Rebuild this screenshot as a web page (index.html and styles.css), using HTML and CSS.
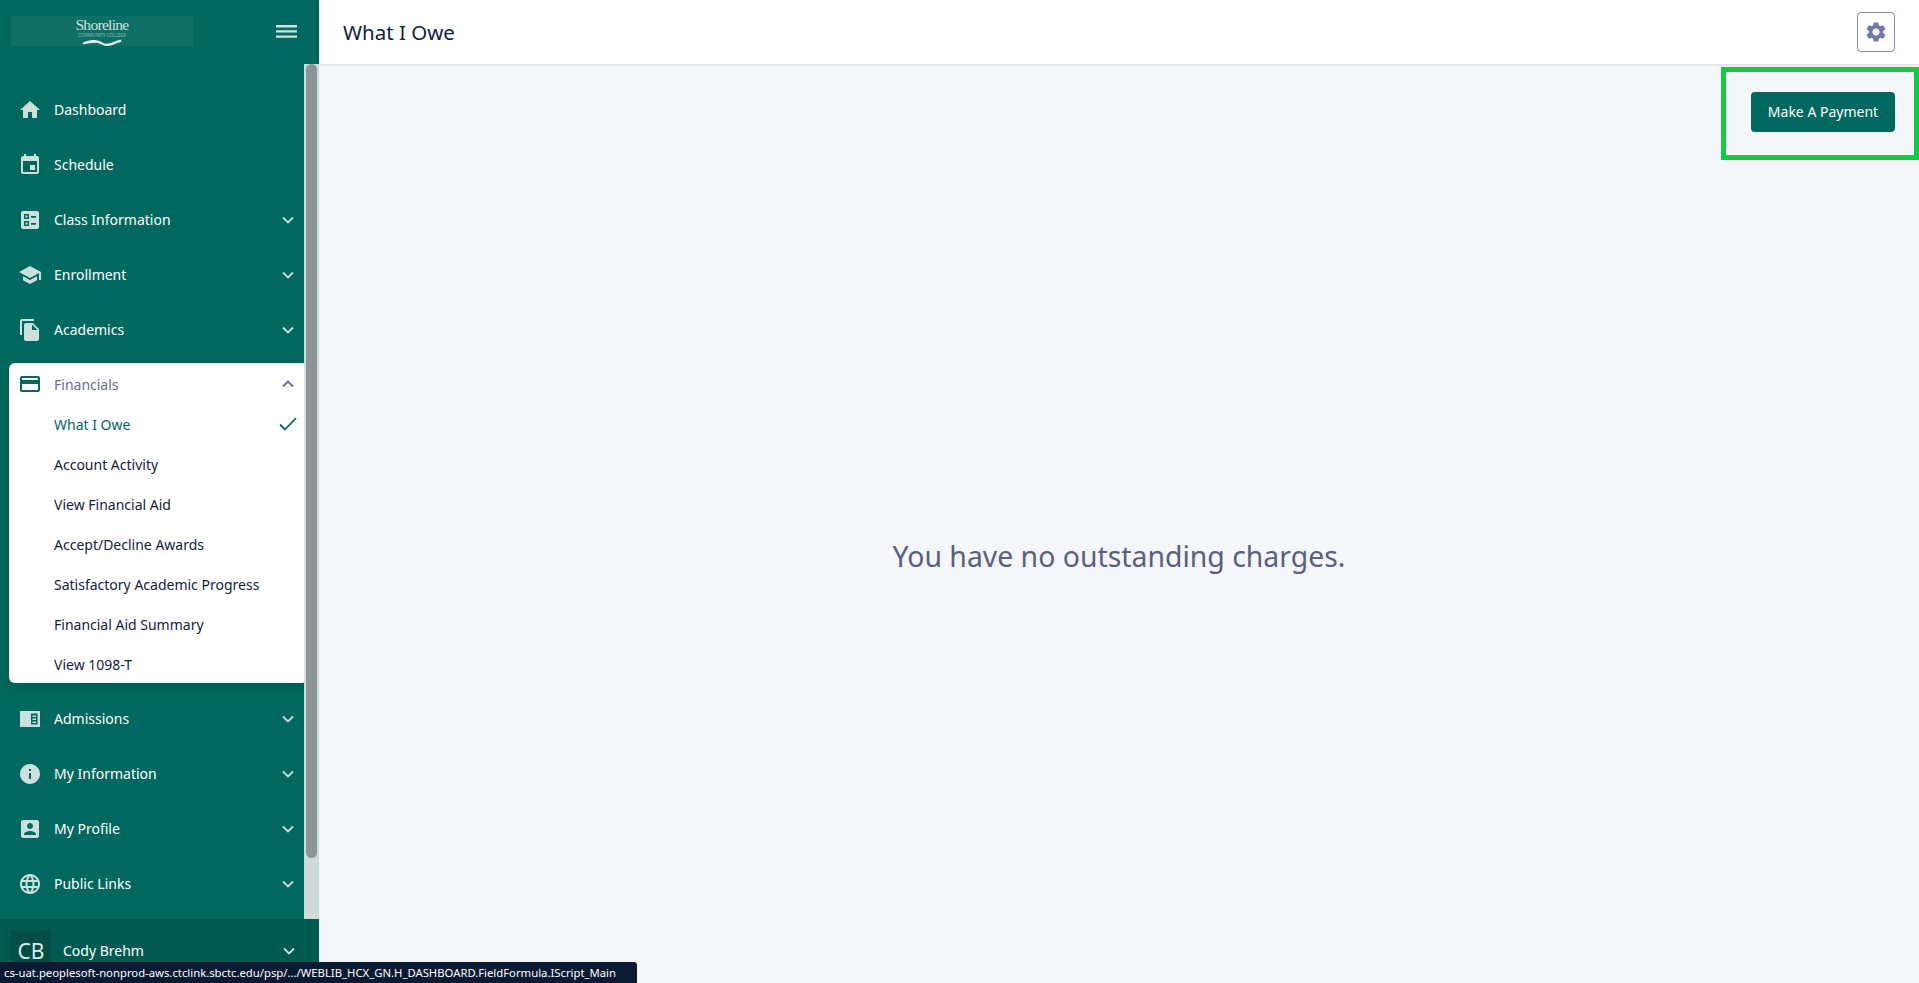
FILE: index.html
```html
<!DOCTYPE html>
<html lang="en">
<head>
    <meta charset="UTF-8">
    <title>What I Owe</title>
    <link rel="stylesheet" href="styles.css">
</head>
<body>

    <!-- Sidebar -->
    <aside class="sidebar">
      <div class="brand">
        <div class="logo">
          <span class="logo-name">Shoreline</span>
          <span class="logo-sub">COMMUNITY COLLEGE</span>
          <svg class="logo-wave" viewBox="0 0 48 10"><path d="M0 6c6-3 12-4 18-3s8 5 14 4 10-4 16-5v3c-6 1-10 4-16 5S22 6 17 6 6 7 0 8z"/></svg>
        </div>
        <svg class="burger" viewBox="0 0 21 13"><path d="M0 0h21v2.4H0zM0 5.2h21v2.4H0zM0 10.4h21v2.4H0z"/></svg>
      </div>

      <nav class="menu">
        <a class="item">
          <svg class="icon" viewBox="0 0 24 24"><path d="M10 20v-6h4v6h5v-8h3L12 3 2 12h3v8z"/></svg>
          <span>Dashboard</span>
        </a>
        <a class="item">
          <svg class="icon" viewBox="0 0 24 24"><path d="M17 12h-5v5h5v-5zM16 1v2H8V1H6v2H5c-1.11 0-1.99.9-1.99 2L3 19c0 1.1.89 2 2 2h14c1.1 0 2-.9 2-2V5c0-1.1-.9-2-2-2h-1V1h-2zm3 18H5V8h14v11z"/></svg>
          <span>Schedule</span>
        </a>
        <a class="item">
          <svg class="icon" viewBox="0 0 24 24"><path fill-rule="evenodd" d="M5 3h14c1.1 0 2 .9 2 2v14c0 1.1-.9 2-2 2H5c-1.1 0-2-.9-2-2V5c0-1.100.9-2 2-2zm1 3v5h5V6H6zm1.500 1.500h2v2h-2zM6 13v5h5v-5H6zm1.500 1.500h2v2h-2zM13 8v1.800h5V8h-5zm0 7v1.800h5V15h-5z"/></svg>
          <span>Class Information</span>
          <svg class="chevron" viewBox="0 0 12 8"><path d="M1 1.500l5 5 5-5"/></svg>
        </a>
        <a class="item">
          <svg class="icon" viewBox="0 0 24 24"><path d="M5 13.180v4L12 21l7-3.820v-4L12 17l-7-3.820zM12 3L1 9l11 6 9-4.910V17h2V9L12 3z"/></svg>
          <span>Enrollment</span>
          <svg class="chevron" viewBox="0 0 12 8"><path d="M1 1.500l5 5 5-5"/></svg>
        </a>
        <a class="item">
          <svg class="icon" viewBox="0 0 24 24"><path d="M16 1H4c-1.100 0-2 .9-2 2v14h2V3h12V1zm-1 4l6 6v10c0 1.100-.9 2-2 2H7.990C6.890 23 6 22.100 6 21l.01-14c0-1.100.89-2 1.990-2h7zm-1 7h5.500L14 6.500V12z"/></svg>
          <span>Academics</span>
          <svg class="chevron" viewBox="0 0 12 8"><path d="M1 1.500l5 5 5-5"/></svg>
        </a>

        <!-- Open group -->
        <div class="group">
          <a class="item group-head">
            <svg class="icon" viewBox="0 0 24 24"><path d="M20 4H4c-1.110 0-1.990.89-1.990 2L2 18c0 1.110.89 2 2 2h16c1.110 0 2-.89 2-2V6c0-1.110-.89-2-2-2zm0 14H4v-6h16v6zm0-10H4V6h16v2z"/></svg>
            <span>Financials</span>
            <svg class="chevron" viewBox="0 0 12 8"><path d="M1 6.500l5-5 5 5"/></svg>
          </a>
          <a class="sub current">
            <span>What I Owe</span>
            <svg class="check" viewBox="0 0 18 14"><path d="M1 7.500l5 5L17 1"/></svg>
          </a>
          <a class="sub">Account Activity</a>
          <a class="sub">View Financial Aid</a>
          <a class="sub">Accept/Decline Awards</a>
          <a class="sub">Satisfactory Academic Progress</a>
          <a class="sub">Financial Aid Summary</a>
          <a class="sub">View 1098-T</a>
        </div>

        <a class="item">
          <svg class="icon" viewBox="0 0 24 24"><path fill-rule="evenodd" d="M3 4h18c.6 0 1 .4 1 1v14c0 .6-.4 1-1 1H3c-.6 0-1-.4-1-1V5c0-.6.4-1 1-1zm10 2.500v11h6.500v-11H13zm1.500 2h3.500V10h-3.500zm0 3h3.500V13h-3.500zm0 3h3.500V16h-3.500z"/></svg>
          <span>Admissions</span>
          <svg class="chevron" viewBox="0 0 12 8"><path d="M1 1.500l5 5 5-5"/></svg>
        </a>
        <a class="item">
          <svg class="icon" viewBox="0 0 24 24"><path d="M12 2C6.480 2 2 6.480 2 12s4.480 10 10 10 10-4.480 10-10S17.520 2 12 2zm1 15h-2v-6h2v6zm0-8h-2V7h2v2z"/></svg>
          <span>My Information</span>
          <svg class="chevron" viewBox="0 0 12 8"><path d="M1 1.500l5 5 5-5"/></svg>
        </a>
        <a class="item">
          <svg class="icon" viewBox="0 0 24 24"><path d="M3 5v14c0 1.100.89 2 2 2h14c1.100 0 2-.9 2-2V5c0-1.100-.9-2-2-2H5c-1.110 0-2 .9-2 2zm12 4c0 1.660-1.340 3-3 3s-3-1.340-3-3 1.340-3 3-3 3 1.340 3 3zm-9 8c0-2 4-3.100 6-3.100s6 1.100 6 3.100v1H6v-1z"/></svg>
          <span>My Profile</span>
          <svg class="chevron" viewBox="0 0 12 8"><path d="M1 1.500l5 5 5-5"/></svg>
        </a>
        <a class="item">
          <svg class="icon" viewBox="0 0 24 24"><path d="M11.990 2C6.470 2 2 6.480 2 12s4.470 10 9.990 10C17.520 22 22 17.520 22 12S17.520 2 11.990 2zm6.930 6h-2.950c-.32-1.250-.78-2.450-1.380-3.560 1.840.63 3.370 1.910 4.330 3.560zM12 4.040c.83 1.200 1.480 2.530 1.910 3.960h-3.820c.43-1.430 1.080-2.760 1.910-3.960zM4.260 14C4.100 13.360 4 12.690 4 12s.1-1.360.26-2h3.380c-.08.66-.14 1.320-.14 2 0 .68.06 1.340.14 2H4.260zm.82 2h2.950c.32 1.250.78 2.450 1.380 3.560-1.840-.63-3.370-1.900-4.330-3.560zm2.950-8H5.080c.96-1.660 2.490-2.930 4.330-3.560C8.810 5.550 8.350 6.750 8.030 8zM12 19.960c-.83-1.200-1.480-2.530-1.910-3.960h3.820c-.43 1.430-1.080 2.760-1.910 3.960zM14.340 14H9.660c-.09-.66-.16-1.320-.16-2 0-.68.07-1.350.16-2h4.680c.09.65.16 1.320.16 2 0 .68-.07 1.340-.16 2zm.25 5.560c.6-1.110 1.060-2.310 1.380-3.560h2.950c-.96 1.650-2.490 2.930-4.330 3.560zM16.360 14c.08-.66.14-1.320.14-2 0-.68-.06-1.340-.14-2h3.380c.16.64.26 1.310.26 2s-.1 1.360-.26 2h-3.380z"/></svg>
          <span>Public Links</span>
          <svg class="chevron" viewBox="0 0 12 8"><path d="M1 1.500l5 5 5-5"/></svg>
        </a>

        <div class="scrollbar"><div class="thumb"></div></div>
      </nav>

      <div class="user">
        <div class="avatar">CB</div>
        <span>Cody Brehm</span>
        <svg class="chevron" viewBox="0 0 12 8"><path d="M1 1.500l5 5 5-5"/></svg>
      </div>
    </aside>

    <!-- Main -->
    <div class="main">
      <header class="topbar">
        <h1>What I Owe</h1>
        <button class="gear">
          <svg viewBox="0 0 24 24"><path d="M19.140 12.940c.04-.3.06-.61.06-.94 0-.32-.02-.64-.07-.94l2.030-1.580c.18-.14.23-.41.12-.61l-1.920-3.320c-.12-.22-.37-.29-.59-.22l-2.390.96c-.5-.38-1.030-.7-1.620-.94l-.36-2.540c-.04-.24-.24-.41-.48-.41h-3.840c-.24 0-.43.17-.47.41l-.36 2.540c-.59.24-1.130.57-1.620.94l-2.390-.96c-.22-.08-.47 0-.59.22L2.740 8.870c-.12.21-.08.47.12.61l2.030 1.580c-.05.3-.09.63-.09.94s.02.64.07.94l-2.030 1.580c-.18.14-.23.41-.12.61l1.920 3.320c.12.22.37.29.59.22l2.390-.96c.5.38 1.030.7 1.620.94l.36 2.540c.05.24.24.41.48.41h3.840c.24 0 .44-.17.47-.41l.36-2.540c.59-.24 1.130-.56 1.620-.94l2.390.96c.22.08.47 0 .59-.22l1.920-3.320c.12-.22.07-.47-.12-.61l-2.010-1.580zM12 15.600c-1.980 0-3.600-1.620-3.600-3.600s1.620-3.600 3.600-3.600 3.600 1.620 3.600 3.600-1.620 3.600-3.600 3.600z"/></svg>
        </button>
      </header>

      <div class="actions">
        <button class="pay">Make A Payment</button>
      </div>

      <div class="empty">You have no outstanding charges.</div>
    </div>

    <!-- Annotation and status tooltip sit over the page -->
    <div class="highlight"></div>
    <div class="status">cs-uat.peoplesoft-nonprod-aws.ctclink.sbctc.edu/psp/.../WEBLIB_HCX_GN.H_DASHBOARD.FieldFormula.IScript_Main</div>

</body>
</html>
```

FILE: styles.css
```css
/* Global */
html, body { height: 100%; }
body {
    margin: 0;
    display: flex;
    overflow: hidden;
    font-family: "Noto Sans", Roboto, sans-serif;
    background-color: #f4f6fa;
}

/* Sidebar */
.sidebar {
    width: 319px;
    flex: none;
    display: flex;
    flex-direction: column;
    background: #00685e;
    color: #fff;
}
.brand {
    height: 64px;
    flex: none;
    display: flex;
    align-items: center;
    justify-content: space-between;
    padding: 0 22px 2px 11px;
    box-sizing: border-box;
}
.logo {
    width: 182px;
    height: 30px;
    display: flex;
    flex-direction: column;
    align-items: center;
    background: rgba(255,255,255,0.05);
    color: #cfe2de;
}
.logo-name { font-family: "Liberation Serif", serif; font-size: 15.5px; line-height: 17px; letter-spacing: -0.7px; }
.logo-sub { font-size: 4.5px; line-height: 5px; white-space: nowrap; opacity: 0.6; }
.logo-wave { width: 48px; height: 8px; fill: #e3eeec; }
.burger { width: 21px; height: 13px; fill: #cfe2de; }

/* Menu */
.menu {
    position: relative;
    flex: 1;
    padding: 18px 15px 0 0;
}
.item {
    height: 55px;
    display: flex;
    align-items: center;
    padding: 0 10px 0 18px;
    font-size: 14px;
}
.item span { flex: 1; margin-left: 12px; }
.icon { width: 24px; height: 24px; flex: none; fill: #cce1de; }
.chevron {
    width: 12px;
    height: 8px;
    flex: none;
    fill: none;
    stroke: #cce1de;
    stroke-width: 1.8;
}

/* Open group */
.group {
    margin: 6px -4px 8px 9px;
    height: 320px;
    background: #fff;
    border-radius: 6px;
    box-shadow: 0 4px 12px rgba(0,0,0,0.15);
}
.group-head { height: 42px; padding-left: 9px; padding-right: 14px; color: #666d8b; }
.group-head .icon { fill: #00685e; }
.group-head .chevron { stroke: #666d8b; }
.sub {
    height: 40px;
    display: flex;
    align-items: center;
    justify-content: space-between;
    padding: 0 11px 0 45px;
    font-size: 14px;
    color: #14213d;
    margin-top: -1px;
    margin-bottom: 1px;
}
.current { color: #00685e; }
.check { width: 18px; height: 14px; fill: none; stroke: #00685e; stroke-width: 1.8; }

/* Fake scrollbar */
.scrollbar {
    position: absolute;
    top: 0;
    right: 0;
    bottom: 0;
    width: 15px;
    background: rgba(213,223,221,0.97);
}
.thumb {
    width: 11px;
    height: 794px;
    margin-left: 2px;
    background: #8b9593;
    border-radius: 6px;
}

/* User */
.user {
    height: 64px;
    flex: none;
    display: flex;
    align-items: center;
    padding: 0 24px 0 11px;
    background: #005a52;
    font-size: 14px;
}
.user span { flex: 1; margin: 0 0 2px 12px; }
.avatar {
    width: 40px;
    height: 40px;
    display: flex;
    align-items: center;
    justify-content: center;
    background: #024e47;
    font-size: 21px;
    color: #dcebe8;
}

/* Main */
.main {
    flex: 1;
    min-width: 0;
    display: flex;
    flex-direction: column;
}
.topbar {
    height: 64px;
    flex: none;
    display: flex;
    align-items: center;
    justify-content: space-between;
    padding: 0 24px;
    background: #fff;
    box-shadow: 0 1px 3px rgba(0,0,0,0.12);
    box-sizing: border-box;
}
h1 { margin: 0; font-size: 20.5px; font-weight: 400; color: #14213d; }
.gear {
    width: 38px;
    height: 40px;
    padding: 0;
    display: flex;
    align-items: center;
    justify-content: center;
    background: #fff;
    border: 1px solid #8089a8;
    border-radius: 4px;
}
.gear svg { width: 24px; height: 24px; fill: #6f7aa8; }

.actions {
    flex: none;
    display: flex;
    justify-content: flex-end;
    padding: 28px 24px 0 0;
}
.pay {
    width: 144px;
    height: 40px;
    padding: 0 0 2px;
    background: #00685e;
    color: #fff;
    border: none;
    border-radius: 4px;
    font-family: inherit;
    font-size: 14px;
}
.empty {
    flex: 1;
    display: flex;
    align-items: center;
    justify-content: center;
    padding-bottom: 4px;
    font-size: 28.4px;
    color: #5a5f7d;
}

/* Overlays */
.highlight {
    position: absolute;
    top: 67px;
    left: 1721px;
    width: 198px;
    height: 93px;
    box-sizing: border-box;
    border: 5px solid #10cc44;
}
.status {
    position: absolute;
    left: 0;
    bottom: 0;
    width: 637px;
    height: 21px;
    box-sizing: border-box;
    padding-left: 4px;
    background: #0b1a33;
    border-top-right-radius: 3px;
    color: #fff;
    font-size: 11.3px;
    line-height: 21px;
    white-space: nowrap;
}
```
